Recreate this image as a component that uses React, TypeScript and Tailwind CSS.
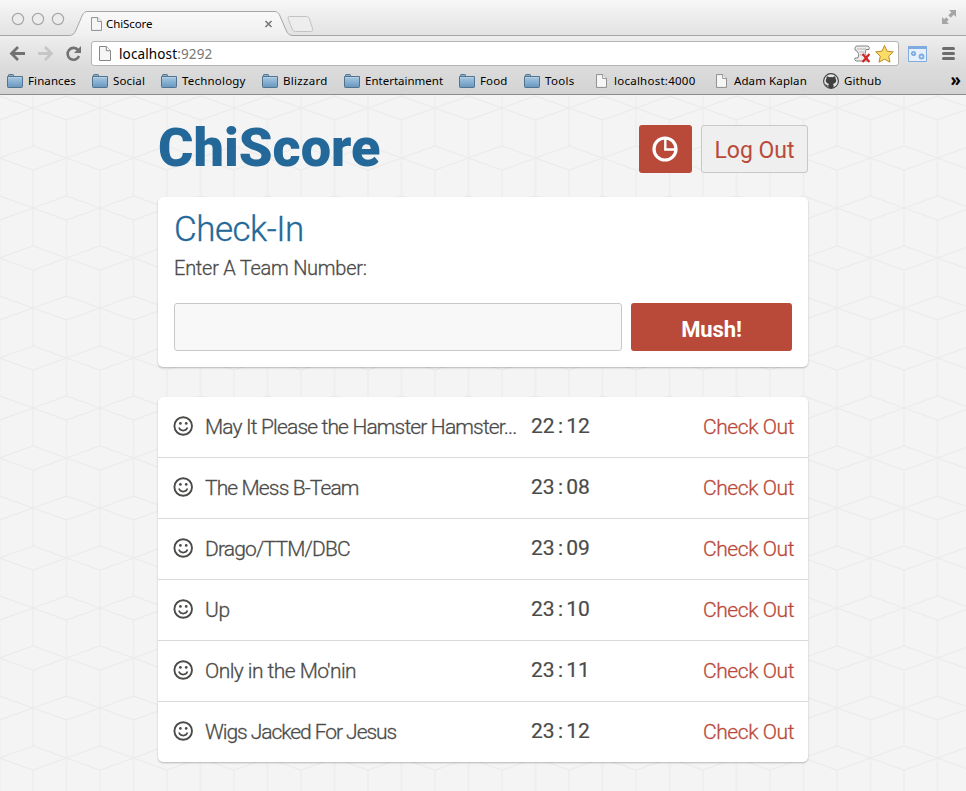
import React from "react";

const bookmarks = [
  { label: "Finances", kind: "folder", box: "w-[85px]", text: "tracking-[0.1px]" },
  { label: "Social", kind: "folder", box: "w-[69px]", text: "tracking-[0.15px]" },
  { label: "Technology", kind: "folder", box: "w-[101px]", text: "tracking-[0.2px]" },
  { label: "Blizzard", kind: "folder", box: "w-[82px]", text: "tracking-[0.3px]" },
  { label: "Entertainment", kind: "folder", box: "w-[115px]", text: "tracking-[0px]" },
  { label: "Food", kind: "folder", box: "w-[65px]", text: "tracking-[0.1px]" },
  { label: "Tools", kind: "folder", box: "w-[71px]", text: "tracking-[0.35px]" },
  { label: "localhost:4000", kind: "page", box: "w-[120px]", text: "-ml-[2px] tracking-[0.25px]" },
  { label: "Adam Kaplan", kind: "page", box: "w-[108px]", text: "-ml-[2px] tracking-[0.1px]" },
  { label: "Github", kind: "github", box: "w-[70px]", text: "tracking-[0.1px]" },
];

const teams = [
  { name: "May It Please the Hamster Hamster...", time: "22:12", text: "tracking-[-0.84px]" },
  { name: "The Mess B-Team", time: "23:08", text: "tracking-[-0.87px]" },
  { name: "Drago/TTM/DBC", time: "23:09", text: "tracking-[-0.82px]" },
  { name: "Up", time: "23:10", text: "tracking-[-0.3px]" },
  { name: "Only in the Mo'nin", time: "23:11", text: "tracking-[-0.55px]" },
  { name: "Wigs Jacked For Jesus", time: "23:12", text: "tracking-[-1.05px]" },
];

function PageIcon({ className }: { className: string }) {
  return (
    <svg className={className} viewBox="0 0 12 15">
      <path d="M.5.5h6.8l4.2 4.2v9.8H.5z" fill="#f6f6f6" stroke="#858585" />
      <path d="M7.3.5v4.2h4.2" fill="#fff" stroke="#858585" />
    </svg>
  );
}

function FolderIcon() {
  return (
    <svg className="h-[14px] w-4" viewBox="0 0 16 14">
      <defs>
        <linearGradient id="folder" x1="0" y1="0" x2="0" y2="1">
          <stop offset="0" stopColor="#a9c9e2" />
          <stop offset="1" stopColor="#6697bf" />
        </linearGradient>
      </defs>
      <path d="M1.5 3V1.2q0-.7.7-.7h3.6q.7 0 .7.7V3" fill="#8fb2cd" stroke="#52738f" />
      <path d="M.5 2.5h15v10.2q0 .8-.8.8H1.3q-.8 0-.8-.8z" fill="url(#folder)" stroke="#52738f" />
      <path d="M1 3.5h14" stroke="#b4d0e5" />
    </svg>
  );
}

function GithubIcon() {
  return (
    <svg className="size-4" viewBox="0 0 16 16">
      <circle cx="8" cy="8" r="7.4" fill="#e6e6e6" stroke="#3f3f3f" strokeWidth="1.1" />
      <path
        d="M3.8 3.3q1.2 0 2.4.9 1.8-.4 3.6 0 1.2-.9 2.4-.9.5 1.1.2 2 1.1 1.3.8 3-.4 2.3-3.2 2.7.6.6.6 1.6v2.1Q8 15.5 5.4 14.7v-1.4q-1.7.3-2.4-.8-.4-.9-1-1.1 1.2-.2 1.9.8.6.5 1.5.3 0-.7.6-1.5-2.8-.4-3.2-2.7-.3-1.7.8-3-.3-.9.2-2z"
        fill="#3f3f3f"
      />
    </svg>
  );
}

function Smiley() {
  return (
    <svg className="mb-[3px] size-5 shrink-0" viewBox="0 0 20 20" fill="none" stroke="#4b4b49">
      <circle cx="10.2" cy="10" r="8.8" strokeWidth="1.9" />
      <path d="M5.9 11.6q1 3 4.3 3t4.3-3" strokeWidth="1.6" />
      <circle cx="7.4" cy="7.4" r="1.35" fill="#4b4b49" stroke="none" />
      <circle cx="13.2" cy="7.4" r="1.35" fill="#4b4b49" stroke="none" />
    </svg>
  );
}

function TabStrip() {
  return (
    <div className="relative flex h-9 items-start bg-linear-to-b from-[#f7f7f7] to-[#e2e2e2]">
      <svg className="absolute inset-0 h-9 w-full" viewBox="0 0 966 36" fill="none">
        <defs>
          <linearGradient id="tab" x1="0" y1="0" x2="0" y2="1">
            <stop offset="0" stopColor="#f9f9f9" />
            <stop offset="1" stopColor="#eeeeee" />
          </linearGradient>
        </defs>
        <path
          d="M-1 35.5H69c4 0 5.5-2 7-5.5l6-14c1.5-3.5 3-4.5 6-4.5h186c3 0 4.5 1 6 4.5l6 14c1.5 3.5 3 5.5 7 5.5h675V40H-1z"
          fill="url(#tab)"
        />
        <path
          d="M-1 35.5H69c4 0 5.5-2 7-5.5l6-14c1.5-3.5 3-4.5 6-4.5h186c3 0 4.5 1 6 4.5l6 14c1.5 3.5 3 5.5 7 5.5h675"
          stroke="#a6a6a6"
        />
        <path
          d="M289.5 16.5h17q2 0 2.8 2l3.3 10q1 3-2 3h-15q-2.4 0-3.3-2.3l-4-10q-1-2.7 1.2-2.7z"
          fill="#ededed"
          stroke="#c3c3c3"
        />
        <g fill="#ececec" stroke="#a8a8a8" strokeWidth="1.2">
          <circle cx="18" cy="19" r="5.6" />
          <circle cx="38" cy="19" r="5.6" />
          <circle cx="58" cy="19" r="5.6" />
        </g>
        <path d="m265.5 21 6 6m0-6-6 6" stroke="#777" strokeWidth="1.6" />
        <g fill="#a6a6a6">
          <path d="M949 10h7v7l-2.3-2.3-3 3-2.4-2.4 3-3z" />
          <path d="M942 24v-7l2.3 2.3 2-2 2.4 2.4-2 2 2.3 2.3z" />
        </g>
      </svg>
      <div className="relative flex h-9 items-center gap-1 pt-[11px] pl-[91px]">
        <PageIcon className="h-[14px] w-[11px]" />
        <span className="text-[11.5px] leading-4 tracking-[-0.1px] text-black">ChiScore</span>
      </div>
    </div>
  );
}

function Toolbar() {
  return (
    <div className="flex h-[31px] items-center bg-linear-to-b from-[#eeeeee] to-[#dcdcdc] pt-1">
      <svg className="h-[25px] w-[91px] shrink-0" viewBox="0 0 91 25" fill="none" strokeWidth="2.8">
        <path d="M25 12.5H13M18 6l-6.5 6.5L18 19" stroke="#727272" />
        <path d="M38 12.5h12M45 6l6.5 6.5L45 19" stroke="#c6c6c6" />
        <path d="M78.2 9.2A5.9 5.9 0 1 0 79 15" stroke="#727272" strokeWidth="2.6" />
        <path d="M81 5v7h-7z" fill="#727272" />
      </svg>
      <div className="flex h-[25px] w-[808px] items-center rounded-[3px] border border-[#b4b4b4] bg-white pr-[3px] pl-[7px]">
        <PageIcon className="h-[15px] w-3" />
        <span className="ml-2 flex-1 text-[13.5px] leading-5 tracking-[0.13px] text-black">
          localhost<span className="text-[#777]">:9292</span>
        </span>
        <svg className="h-5 w-[42px]" viewBox="0 0 42 20">
          <path d="M4 2h11q2 1 1 3.5h-3q-2 4 1 8l1 3.5H3q-2-1-1-3h3q2-4-1-7-3-.5-2-3 .5-2 2-2z" fill="#ededed" stroke="#858585" />
          <path d="M4 5h9M6.5 8h5M7 11h5" stroke="#b5b5b5" />
          <path d="m9.5 10 7 8m0-8-7 8" stroke="#d8201c" strokeWidth="2" />
          <path
            d="m31.5 1.5 2.6 5.7 6.2.7-4.6 4.2 1.3 6.1-5.5-3.1-5.5 3.1 1.3-6.1-4.6-4.2 6.2-.7z"
            fill="#fbdc67"
            stroke="#b98b26"
            strokeLinejoin="round"
          />
        </svg>
      </div>
      <svg className="ml-[9px] h-[25px] w-12" viewBox="0 0 48 25">
        <path d="M.5 5.5h18v15H.5z" fill="#e6f0fb" stroke="#7fabe0" />
        <path d="M0 5h19v3H0z" fill="#7fabe0" />
        <g fill="none" stroke="#7fabe0" strokeWidth="1.8">
          <circle cx="5.5" cy="12.5" r="1.7" />
          <circle cx="13.5" cy="15.5" r="2" />
        </g>
        <path d="M35.5 7.5h10M35.5 12.5h10M35.5 17.5h10" stroke="#6c6c6c" strokeWidth="3" strokeLinecap="round" />
      </svg>
    </div>
  );
}

function BookmarksBar() {
  return (
    <div className="flex h-7 items-center border-b border-[#8c8c8c] bg-linear-to-b from-[#dcdcdc] to-[#d3d3d3] pl-[7px]">
      {bookmarks.map((b) => (
        <div key={b.label} className={`flex shrink-0 items-center ${b.box}`}>
          {b.kind === "folder" && <FolderIcon />}
          {b.kind === "page" && <PageIcon className="mr-1 ml-px h-[14px] w-[11px]" />}
          {b.kind === "github" && <GithubIcon />}
          <span className={`pl-[5px] text-[11.5px] leading-4 whitespace-nowrap text-black ${b.text}`}>{b.label}</span>
        </div>
      ))}
      <span className="mb-px ml-auto pr-[5px] text-[17px] leading-5 font-bold text-black">»</span>
    </div>
  );
}

function CubeBackground() {
  return (
    <svg className="absolute inset-0 size-full" fill="none">
      <defs>
        <pattern id="cubes" width="67" height="100" patternUnits="userSpaceOnUse" x="-0.5" y="13">
          <g stroke="#ebebeb" strokeWidth="1.2">
            <path d="M0 50 33.5 38 67 50 33.5 62z" />
            <path d="M-33.5 0 0-12 33.5 0 0 12zM33.5 0 67-12 100.5 0 67 12z" />
            <path d="M-33.5 100 0 88 33.5 100 0 112zM33.5 100 67 88 100.5 100 67 112z" />
            <path d="M33.5 0v38M33.5 62v38M0 12v76M67 12v76" />
          </g>
        </pattern>
      </defs>
      <rect width="100%" height="100%" fill="url(#cubes)" />
    </svg>
  );
}

export default function App() {
  return (
    <div className="flex h-[791px] w-[966px] flex-col overflow-hidden bg-[#f4f4f4] font-['Noto_Sans',sans-serif]">
      <TabStrip />
      <Toolbar />
      <BookmarksBar />
      <div className="relative flex-1 font-[Roboto,sans-serif]">
        <CubeBackground />
        <main className="relative mx-auto w-[650px] pt-[30px]">
          <header className="flex h-12">
            <h1 className="flex-1 text-[54px] leading-[46px] font-black text-[#246899]">ChiScore</h1>
            <button className="flex h-12 w-[53px] items-center justify-center rounded-[3px] bg-[#b94a3a]">
              <svg className="mr-px size-[26px]" viewBox="0 0 26 26" fill="none" stroke="#fff">
                <circle cx="13" cy="13" r="11" strokeWidth="3.2" />
                <path d="M13.3 3v10.5H23" strokeWidth="2.4" />
              </svg>
            </button>
            <button className="ml-[9px] h-12 w-[107px] rounded-[3px] border border-[#c8c8c8] bg-[#efefef] pt-[5px] text-[23px] text-[#b94a3a]">
              Log Out
            </button>
          </header>
          <section className="mt-6 h-[170px] rounded-[5px] bg-white px-4 pt-[15px] shadow-[0_1px_2px_rgba(0,0,0,0.25)]">
            <h2 className="text-[35px] leading-9 font-light tracking-[-0.5px] text-[#246899] [-webkit-text-stroke:0.3px]">Check-In</h2>
            <p className="mt-2 text-[20px] leading-6 font-light tracking-[-0.25px] text-[#4b4b49] [-webkit-text-stroke:0.3px]">Enter A Team Number:</p>
            <div className="mt-[23px] flex gap-[9px]">
              <input className="h-12 w-[448px] rounded-[3px] border border-[#c8c8c8] bg-[#f8f8f8]" />
              <button className="h-12 w-[161px] rounded-[3px] bg-[#b94a3a] pt-1 text-[22px] font-bold tracking-[-0.1px] text-white">Mush!</button>
            </div>
          </section>
          <ul className="mt-[30px] overflow-hidden rounded-[5px] bg-white shadow-[0_1px_2px_rgba(0,0,0,0.25)]">
            {teams.map((t) => (
              <li key={t.name} className="flex h-[61px] items-center border-b border-[#d9d9d9] pr-[14px] pl-[15px] text-[21px] last:h-[60px] last:border-b-0">
                <Smiley />
                <span className={`ml-3 w-[326px] pt-[2px] font-light whitespace-nowrap text-[#4b4b49] [-webkit-text-stroke:0.3px] ${t.text}`}>
                  {t.name}
                </span>
                <span className="text-[21px] text-[#4b4b49] [-webkit-text-stroke:0.2px]">
                  {t.time.slice(0, 2)}
                  <span className="px-[3.3px]">:</span>
                  {t.time.slice(3)}
                </span>
                <a className="ml-auto pt-[2px] font-light tracking-[-0.42px] text-[#b94a3a] [-webkit-text-stroke:0.3px]">Check Out</a>
              </li>
            ))}
          </ul>
        </main>
      </div>
    </div>
  );
}
